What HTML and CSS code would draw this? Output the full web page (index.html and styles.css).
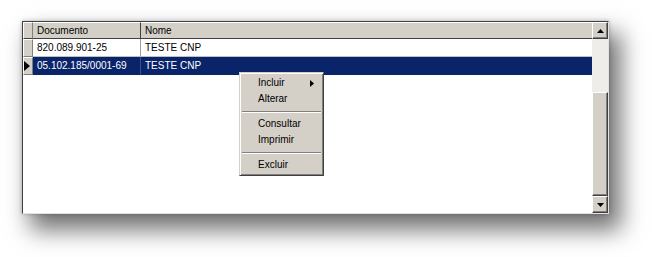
FILE: index.html
```html
<!DOCTYPE html>
<html lang="pt">
<head>
  <meta charset="UTF-8" />
  <title>Grid</title>
  <link rel="stylesheet" href="styles.css">
</head>
<body>
  <div class="grid-frame">
    <div class="grid-body">
      <div class="grid-row header-row">
        <div class="indicator"></div>
        <div class="cell col-doc">Documento</div>
        <div class="cell col-nome">Nome</div>
      </div>
      <div class="grid-row">
        <div class="indicator"></div>
        <div class="cell col-doc">820.089.901-25</div>
        <div class="cell col-nome">TESTE CNP</div>
      </div>
      <div class="grid-row selected">
        <div class="indicator">
          <svg width="6" height="10" viewBox="0 0 6 10"><path d="M0 0 L6 5 L0 10 Z" fill="#000"/></svg>
        </div>
        <div class="cell col-doc">05.102.185/0001-69</div>
        <div class="cell col-nome">TESTE CNP</div>
      </div>
    </div>

    <div class="scrollbar">
      <div class="scroll-btn">
        <svg width="7" height="4" viewBox="0 0 7 4"><path d="M3.5 0 L7 4 L0 4 Z" fill="#000"/></svg>
      </div>
      <div class="scroll-track"></div>
      <div class="scroll-thumb"></div>
      <div class="scroll-btn">
        <svg width="7" height="4" viewBox="0 0 7 4"><path d="M0 0 L7 0 L3.5 4 Z" fill="#000"/></svg>
      </div>
    </div>

    <!-- popup menu over the grid -->
    <ul class="context-menu">
      <li class="menu-item">Incluir
        <svg class="submenu-arrow" width="4" height="7" viewBox="0 0 4 7"><path d="M0 0 L4 3.5 L0 7 Z" fill="#000"/></svg>
      </li>
      <li class="menu-item">Alterar</li>
      <li class="menu-sep"></li>
      <li class="menu-item">Consultar</li>
      <li class="menu-item">Imprimir</li>
      <li class="menu-sep"></li>
      <li class="menu-item">Excluir</li>
    </ul>
  </div>
</body>
</html>
```

FILE: styles.css
```css
html {
  background: #fff;
}

body {
  margin: 0;
  padding: 21px 0 0 22px;
  min-height: 257px;
  box-sizing: border-box;
  background: #fff;
  font-family: "Liberation Sans", Arial, sans-serif;
  font-size: 10px;
  color: #000;
}

.grid-frame {
  position: relative;
  display: flex;
  width: 585px;
  height: 191px;
  border: 1px solid;
  border-color: #404040 #e4e2dc #e4e2dc #404040;
  background: #fff;
  box-shadow: 10px 14px 22px 2px rgba(0, 0, 0, 0.55), 0 0 4px rgba(0, 0, 0, 0.25);
}

.grid-body {
  flex: 1;
  display: flex;
  flex-direction: column;
}

.grid-row {
  display: flex;
  height: 18px;
}

.indicator {
  width: 8px;
  background: #d4d0c8;
  border-top: 1px solid #fff;
  border-left: 1px solid #fff;
  border-right: 1px solid #808080;
  border-bottom: 1px solid #808080;
  display: flex;
  align-items: center;
}

.cell {
  line-height: 17px;
  padding-left: 4px;
  white-space: nowrap;
  border-bottom: 1px solid #c0c0c0;
}

.col-doc {
  width: 103px;
  border-right: 1px solid #a0a0a0;
}

.col-nome {
  flex: 1;
}

/* Column titles */
.header-row {
  height: 17px;
}

.header-row .indicator {
  border-bottom-color: #404040;
}

.header-row .cell {
  background: #d4d0c8;
  line-height: 15px;
  border-top: 1px solid #fff;
  border-bottom: 1px solid #404040;
}

.header-row .col-doc {
  border-right: 1px solid #404040;
}

.selected .cell {
  background: #0a246a;
  color: #fff;
  border-bottom-color: #0a246a;
}

.selected .col-doc {
  border-right-color: #3a5090;
}

/* Vertical scrollbar */
.scrollbar {
  width: 16px;
  display: flex;
  flex-direction: column;
  background: #eceae5;
}

.scroll-btn,
.scroll-thumb {
  box-sizing: border-box;
  background: #d4d0c8;
  border: 1px solid;
  border-color: #fff #404040 #404040 #fff;
  box-shadow: inset -1px -1px 0 #808080;
}

.scroll-btn {
  height: 17px;
  display: flex;
  align-items: center;
  justify-content: center;
}

.scroll-track {
  height: 53px;
  background: #eeede9;
}

.scroll-thumb {
  flex: 1;
}

/* Context menu */
.context-menu {
  position: absolute;
  left: 216px;
  top: 50px;
  width: 81px;
  margin: 0;
  padding: 2px 1px;
  list-style: none;
  background: #d4d0c8;
  border: 1px solid;
  border-color: #d4d0c8 #404040 #404040 #d4d0c8;
  box-shadow: inset 1px 1px 0 #fff, inset -1px -1px 0 #808080;
}

.menu-item {
  position: relative;
  height: 16px;
  line-height: 16px;
  padding-left: 17px;
}

.submenu-arrow {
  position: absolute;
  right: 8px;
  top: 5px;
}

.menu-sep {
  height: 9px;
  margin: 0 1px;
  display: flex;
  flex-direction: column;
  justify-content: center;
}

.menu-sep::before {
  content: "";
  display: block;
  border-top: 1px solid #808080;
  border-bottom: 1px solid #fff;
}
```
